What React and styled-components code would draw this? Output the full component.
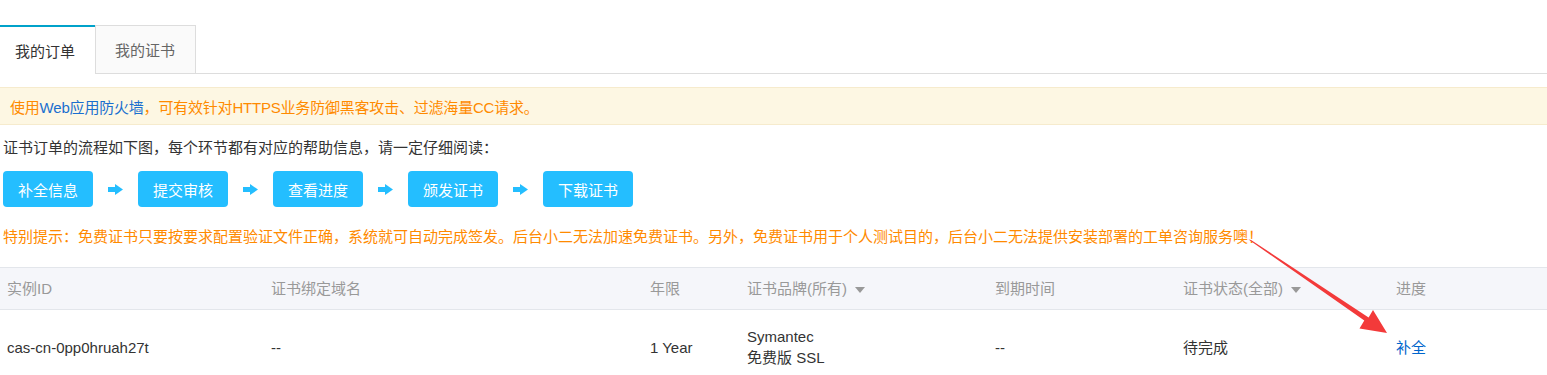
import React from "react";
import styled, { createGlobalStyle } from "styled-components";

const GlobalStyle = createGlobalStyle`
  html, body {
    margin: 0;
    padding: 0;
    background: #fff;
  }
  body {
    font-family: "Liberation Sans", "Noto Sans CJK SC", sans-serif;
    font-size: 15px;
    color: #333;
  }
`;

const Page = styled.div`
  position: relative;
  width: 1547px;
  height: 375px;
  overflow: hidden;
  padding-top: 25px;
  box-sizing: border-box;
`;

const Tabs = styled.div`
  display: flex;
  height: 48px;
  border-bottom: 1px solid #ddd;
`;

const Tab = styled.div`
  display: flex;
  align-items: center;
  box-sizing: border-box;
  height: ${(p) => (p.active ? "49px" : "48px")};
  padding: ${(p) => (p.active ? "0 20px 1px 15px" : "0 20px 0 19px")};
  font-size: 15px;
  color: ${(p) => (p.active ? "#333" : "#666")};
  background: ${(p) => (p.active ? "#fff" : "#fafafa")};
  border-top: ${(p) => (p.active ? "2px solid #00a2ca" : "1px solid #ddd")};
  border-left: ${(p) => (p.active ? "none" : "1px solid #ddd")};
  border-right: ${(p) => (p.active ? "none" : "1px solid #ddd")};
`;

const Notice = styled.div`
  margin-top: 13px;
  height: 36px;
  display: flex;
  align-items: center;
  padding-left: 10px;
  background: #fdf7e3;
  border-top: 1px solid #f6ebcd;
  border-bottom: 1px solid #f6ebcd;
  color: #ff8a00;
  font-size: 15px;
  letter-spacing: -0.2px;
`;

const NoticeLink = styled.span`
  color: #1a6fcf;
`;

const Intro = styled.p`
  margin: 12px 0 0;
  padding-left: 3px;
  line-height: 22px;
  font-size: 15px;
  color: #333;
`;

const Steps = styled.div`
  display: flex;
  align-items: center;
  margin-top: 12px;
  padding-left: 3px;
`;

const StepButton = styled.div`
  display: flex;
  align-items: center;
  justify-content: center;
  width: 90px;
  height: 36px;
  border-radius: 4px;
  background: #24beff;
  color: #fff;
  font-size: 15px;
`;

const StepArrow = styled.svg`
  display: block;
  width: 15px;
  height: 11px;
  margin: 0 15px;
`;

const Tip = styled.p`
  margin: 19px 0 0;
  padding-left: 3px;
  line-height: 22px;
  font-size: 15px;
  color: #ff8a00;
`;

const Table = styled.div`
  margin-top: 19px;
`;

const columns = [264, 379, 97, 248, 188, 213, 158];

const HeaderRow = styled.div`
  display: flex;
  height: 41px;
  align-items: center;
  background: #f5f6fa;
  border-top: 1px solid #e3e6eb;
  border-bottom: 1px solid #e3e6eb;
`;

const BodyRow = styled.div`
  display: flex;
  align-items: center;
  padding: 16px 0;
`;

const Cell = styled.div`
  flex: 0 0 ${(p) => p.w}px;
  box-sizing: border-box;
  padding-left: 7px;
  font-size: 15px;
  line-height: 21px;
  color: ${(p) => (p.head ? "#999" : "#333")};
`;

const Caret = styled.span`
  display: inline-block;
  margin-left: 8px;
  vertical-align: middle;
  border-left: 5px solid transparent;
  border-right: 5px solid transparent;
  border-top: 6px solid #999;
`;

const Link = styled.a`
  color: #0066cc;
  text-decoration: none;
`;

const Annotation = styled.svg`
  position: absolute;
  left: 0;
  top: 0;
  width: 1547px;
  height: 375px;
  pointer-events: none;
`;

const Arrow = () => (
  <StepArrow viewBox="0 0 15 11">
    <rect x="0" y="3" width="8" height="5" fill="#24beff" />
    <polygon points="7,0 15,5.5 7,11" fill="#24beff" />
  </StepArrow>
);

const steps = ["补全信息", "提交审核", "查看进度", "颁发证书", "下载证书"];

const App = () => (
  <Page>
    <GlobalStyle />
    <Tabs>
      <Tab active>我的订单</Tab>
      <Tab>我的证书</Tab>
    </Tabs>
    <Notice>
      使用<NoticeLink>Web应用防火墙</NoticeLink>，可有效针对HTTPS业务防御黑客攻击、过滤海量CC请求。
    </Notice>
    <Intro>证书订单的流程如下图，每个环节都有对应的帮助信息，请一定仔细阅读：</Intro>
    <Steps>
      {steps.map((s, i) => (
        <React.Fragment key={s}>
          {i > 0 && <Arrow />}
          <StepButton>{s}</StepButton>
        </React.Fragment>
      ))}
    </Steps>
    <Tip>
      特别提示：免费证书只要按要求配置验证文件正确，系统就可自动完成签发。后台小二无法加速免费证书。另外，免费证书用于个人测试目的，后台小二无法提供安装部署的工单咨询服务噢！
    </Tip>
    <Table>
      <HeaderRow>
        <Cell head w={columns[0]}>实例ID</Cell>
        <Cell head w={columns[1]}>证书绑定域名</Cell>
        <Cell head w={columns[2]}>年限</Cell>
        <Cell head w={columns[3]}>
          证书品牌(所有)<Caret />
        </Cell>
        <Cell head w={columns[4]}>到期时间</Cell>
        <Cell head w={columns[5]}>
          证书状态(全部)<Caret />
        </Cell>
        <Cell head w={columns[6]}>进度</Cell>
      </HeaderRow>
      <BodyRow>
        <Cell w={columns[0]}>cas-cn-0pp0hruah27t</Cell>
        <Cell w={columns[1]}>--</Cell>
        <Cell w={columns[2]}>1 Year</Cell>
        <Cell w={columns[3]}>
          Symantec
          <br />
          免费版 SSL
        </Cell>
        <Cell w={columns[4]}>--</Cell>
        <Cell w={columns[5]}>待完成</Cell>
        <Cell w={columns[6]}>
          <Link href="#">补全</Link>
        </Cell>
      </BodyRow>
    </Table>
    <Annotation viewBox="0 0 1547 375">
      <polygon
        points="1248.5,239.5 1251,240 1368.6,317.6 1373,310 1387,333 1359.5,328.5 1364.3,320.5"
        fill="#f33a3a"
      />
    </Annotation>
  </Page>
);

export default App;
